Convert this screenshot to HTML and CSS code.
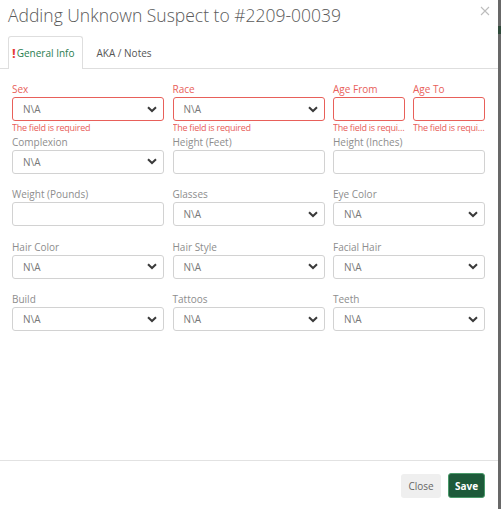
FILE: index.html
```html
<!DOCTYPE html>
<html lang="en">
<head>
  <meta charset="UTF-8" />
  <title>Adding Unknown Suspect</title>
  <link rel="stylesheet" href="styles.css">
</head>
<body>
  <div class="screen">
    <div class="modal">
      <div class="modal-header">
        <h1 class="modal-title">Adding Unknown Suspect to #2209-00039</h1>
        <svg class="close-x" width="10" height="10" viewBox="0 0 10 10">
          <path d="M1 1 L9 9 M9 1 L1 9" stroke="#bdbdbd" stroke-width="1.1" fill="none" />
        </svg>
      </div>

      <div class="tabs">
        <div class="tab active"><span class="tab-alert">!</span>General Info</div>
        <div class="tab">AKA / Notes</div>
      </div>

      <div class="modal-body">
        <div class="form-grid">
          <!-- row 1 -->
          <div class="field invalid">
            <label>Sex</label>
            <div class="select"><span>N\A</span><svg width="10" height="7" viewBox="0 0 10 7"><path d="M1 1.2 L5 5 L9 1.2" stroke="#3a3a3a" stroke-width="2" fill="none" /></svg></div>
            <div class="error">The field is required</div>
          </div>
          <div class="field invalid">
            <label>Race</label>
            <div class="select"><span>N\A</span><svg width="10" height="7" viewBox="0 0 10 7"><path d="M1 1.2 L5 5 L9 1.2" stroke="#3a3a3a" stroke-width="2" fill="none" /></svg></div>
            <div class="error">The field is required</div>
          </div>
          <div class="field-pair">
            <div class="field invalid">
              <label>Age From</label>
              <div class="input"></div>
              <div class="error">The field is required</div>
            </div>
            <div class="field invalid">
              <label>Age To</label>
              <div class="input"></div>
              <div class="error">The field is required</div>
            </div>
          </div>

          <!-- row 2 -->
          <div class="field">
            <label>Complexion</label>
            <div class="select"><span>N\A</span><svg width="10" height="7" viewBox="0 0 10 7"><path d="M1 1.2 L5 5 L9 1.2" stroke="#3a3a3a" stroke-width="2" fill="none" /></svg></div>
          </div>
          <div class="field">
            <label>Height (Feet)</label>
            <div class="input"></div>
          </div>
          <div class="field">
            <label>Height (Inches)</label>
            <div class="input"></div>
          </div>

          <!-- row 3 -->
          <div class="field">
            <label>Weight (Pounds)</label>
            <div class="input"></div>
          </div>
          <div class="field">
            <label>Glasses</label>
            <div class="select"><span>N\A</span><svg width="10" height="7" viewBox="0 0 10 7"><path d="M1 1.2 L5 5 L9 1.2" stroke="#3a3a3a" stroke-width="2" fill="none" /></svg></div>
          </div>
          <div class="field">
            <label>Eye Color</label>
            <div class="select"><span>N\A</span><svg width="10" height="7" viewBox="0 0 10 7"><path d="M1 1.2 L5 5 L9 1.2" stroke="#3a3a3a" stroke-width="2" fill="none" /></svg></div>
          </div>

          <!-- row 4 -->
          <div class="field">
            <label>Hair Color</label>
            <div class="select"><span>N\A</span><svg width="10" height="7" viewBox="0 0 10 7"><path d="M1 1.2 L5 5 L9 1.2" stroke="#3a3a3a" stroke-width="2" fill="none" /></svg></div>
          </div>
          <div class="field">
            <label>Hair Style</label>
            <div class="select"><span>N\A</span><svg width="10" height="7" viewBox="0 0 10 7"><path d="M1 1.2 L5 5 L9 1.2" stroke="#3a3a3a" stroke-width="2" fill="none" /></svg></div>
          </div>
          <div class="field">
            <label>Facial Hair</label>
            <div class="select"><span>N\A</span><svg width="10" height="7" viewBox="0 0 10 7"><path d="M1 1.2 L5 5 L9 1.2" stroke="#3a3a3a" stroke-width="2" fill="none" /></svg></div>
          </div>

          <!-- row 5 -->
          <div class="field">
            <label>Build</label>
            <div class="select"><span>N\A</span><svg width="10" height="7" viewBox="0 0 10 7"><path d="M1 1.2 L5 5 L9 1.2" stroke="#3a3a3a" stroke-width="2" fill="none" /></svg></div>
          </div>
          <div class="field">
            <label>Tattoos</label>
            <div class="select"><span>N\A</span><svg width="10" height="7" viewBox="0 0 10 7"><path d="M1 1.2 L5 5 L9 1.2" stroke="#3a3a3a" stroke-width="2" fill="none" /></svg></div>
          </div>
          <div class="field">
            <label>Teeth</label>
            <div class="select"><span>N\A</span><svg width="10" height="7" viewBox="0 0 10 7"><path d="M1 1.2 L5 5 L9 1.2" stroke="#3a3a3a" stroke-width="2" fill="none" /></svg></div>
          </div>
        </div>
      </div>

      <div class="modal-footer">
        <button class="btn btn-close">Close</button>
        <button class="btn btn-save">Save</button>
      </div>
    </div>

    <!-- page behind the modal -->
    <div class="backdrop">
      <div class="backdrop-band"></div>
    </div>
  </div>
</body>
</html>
```

FILE: styles.css
```css
 html, body {
   margin: 0;
   height: 100%;
 }

 body {
   font-family: 'Open Sans', 'Noto Sans', sans-serif;
   color: #555;
   background: #6b6b6b;
 }

 .screen {
   display: flex;
   height: 509px;
 }

 .modal {
   width: 498px;
   flex: none;
   background: #fff;
   display: flex;
   flex-direction: column;
 }

 .backdrop {
   flex: 1;
   background: #686868;
   padding-top: 26px;
 }

 .backdrop-band {
   height: 8px;
   background: #2e4a3a;
 }

 /* Header */
 .modal-header {
   display: flex;
   justify-content: space-between;
   align-items: flex-start;
   height: 36px;
   padding: 0 8px;
 }

 .modal-title {
   margin: 0;
   font-size: 17.5px;
   font-weight: 300;
   line-height: 30px;
   color: #5a5a5a;
 }

 .close-x {
   margin-top: 6px;
 }

 /* Tabs */
 .tabs {
   display: flex;
   padding-left: 8px;
   border-bottom: 1px solid #dedede;
   height: 32px;
 }

 .tab {
   font-size: 10px;
   color: #555;
   padding: 0 12px;
   display: flex;
   align-items: center;
   border: 1px solid transparent;
   border-bottom: none;
 }

 .tab.active {
   color: #2a7d50;
   border-color: #dedede;
   border-radius: 3px 3px 0 0;
   background: #fff;
   margin-bottom: -1px;
   padding: 0 8px 0 3px;
 }

 .tab-alert {
   color: #e53935;
   font-weight: 700;
   font-size: 13px;
   margin-right: 1px;
 }

 /* Form */
 .modal-body {
   flex: 1;
   padding: 14px 13px 0 12px;
 }

 .form-grid {
   display: grid;
   grid-template-columns: repeat(3, 1fr);
   column-gap: 8.5px;
 }

 .field-pair {
   display: grid;
   grid-template-columns: 1fr 1fr;
   column-gap: 8px;
 }

 .field {
   margin-bottom: 14.5px;
   min-width: 0;
 }

 .field label {
   display: block;
   font-size: 10px;
   line-height: 13px;
   height: 13px;
   margin-bottom: 1px;
   color: #8d8d8d;
 }

 .select, .input {
   box-sizing: border-box;
   height: 24px;
   border: 1px solid #d2d2d2;
   border-radius: 3px;
   background: #fff;
 }

 .select {
   display: flex;
   align-items: center;
   justify-content: space-between;
   padding: 0 6px 0 10px;
   font-size: 10px;
   color: #777;
 }

 .invalid label {
   color: #e8605a;
 }

 .invalid .select, .invalid .input {
   border-color: #e8605a;
 }

 .error {
   font-size: 9px;
   line-height: 11px;
   margin-top: 1px;
   margin-bottom: -12px;
   color: #e8605a;
   letter-spacing: -0.25px;
   white-space: nowrap;
   overflow: hidden;
   text-overflow: ellipsis;
 }

 /* Footer */
 .modal-footer {
   border-top: 1px solid #e2e2e2;
   height: 49px;
   display: flex;
   justify-content: flex-end;
   align-items: flex-start;
   gap: 7px;
   padding: 12px 13px 0 0;
   box-sizing: border-box;
 }

 .btn {
   font-family: inherit;
   font-size: 10px;
   border-radius: 3px;
   cursor: pointer;
 }

 .btn-close {
   margin-top: 1px;
   height: 24px;
   width: 40px;
   padding: 0;
   border: none;
   background: #efefef;
   color: #666;
 }

 .btn-save {
   height: 25px;
   width: 37px;
   padding: 0;
   border: 1px solid #4a9a6a;
   background: #1d5a3a;
   color: #fff;
   font-weight: 700;
 }
```
